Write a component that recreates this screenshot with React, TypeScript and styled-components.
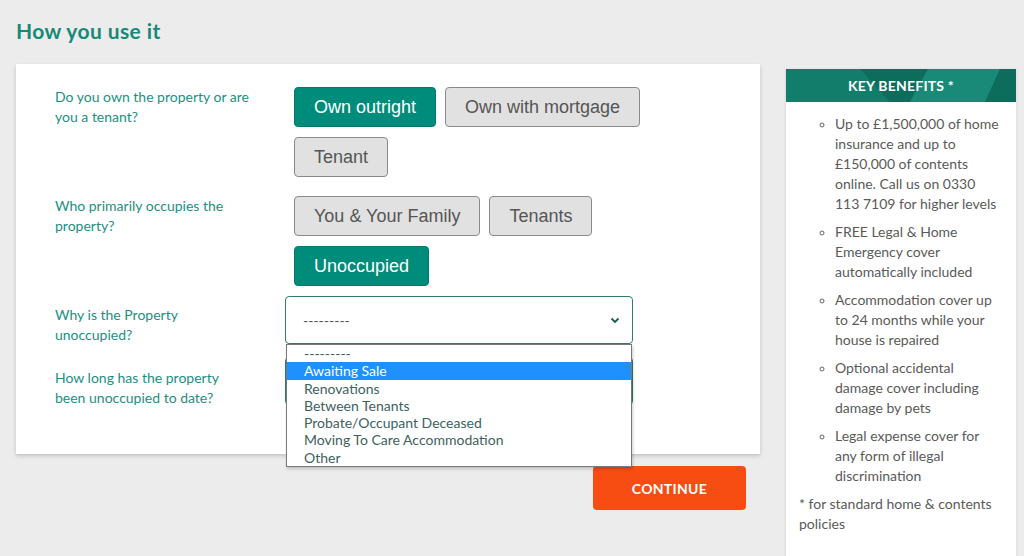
import styled, { createGlobalStyle } from "styled-components"

const Global = createGlobalStyle`
  html, body {
    margin: 0;
    padding: 0;
    background: #ececec;
    overflow: hidden;
  }
  body {
    font-family: Lato, "Noto Sans", "Liberation Sans", sans-serif;
  }
`

const Page = styled.div`
  padding: 19px 8px 0 16px;
  width: 1000px;
  box-sizing: border-box;
`

const Title = styled.h2`
  margin: 0 0 21px;
  font-size: 21px;
  line-height: 24px;
  font-weight: 700;
  letter-spacing: 0.4px;
  color: #168a78;
`

const Layout = styled.div`
  display: flex;
  align-items: flex-start;
  gap: 26px;
`

const Main = styled.div`
  width: 744px;
  flex: none;
`

const Card = styled.div`
  background: #fff;
  box-shadow: 0 2px 4px rgba(0, 0, 0, 0.18);
  padding: 23px 0 46px 39px;
`

const QuestionRow = styled.div<{ $space?: number }>`
  display: flex;
  align-items: flex-start;
  margin-top: ${(p) => p.$space ?? 0}px;
`

const Label = styled.div<{ $pad?: number }>`
  width: 230px;
  flex: none;
  box-sizing: border-box;
  padding: ${(p) => p.$pad ?? 0}px 34px 0 0;
  font-size: 14px;
  line-height: 20px;
  color: #1d8f7f;
`

const Options = styled.div`
  width: 380px;
  display: flex;
  flex-wrap: wrap;
  gap: 10px 9px;
  padding-left: 9px;
`

const Choice = styled.button<{ $active?: boolean }>`
  height: 40px;
  padding: 0 19px;
  border-radius: 4px;
  font-family: "Liberation Sans", Arial, sans-serif;
  font-size: 18px;
  border: 1px solid ${(p) => (p.$active ? "#007a6b" : "#8a8a8a")};
  background: ${(p) => (p.$active ? "#008c7a" : "#e1e1e1")};
  color: ${(p) => (p.$active ? "#fff" : "#555")};
`

const SelectWrap = styled.div`
  position: relative;
  width: 348px;
`

const SelectBox = styled.div`
  height: 48px;
  box-sizing: border-box;
  border: 1px solid #2f7d70;
  border-radius: 4px;
  padding: 0 12px 0 17px;
  display: flex;
  align-items: center;
  justify-content: space-between;
  font-size: 14px;
  color: #555;
  background: #fff;
`

const Chevron = () => (
  <svg width="10" height="7" viewBox="0 0 10 7">
    <path d="M1.5 1.5 L5 5 L8.5 1.5" fill="none" stroke="#1f5a52" strokeWidth="1.8" />
  </svg>
)

const OptionList = styled.ul`
  position: absolute;
  top: 48px;
  left: 1px;
  width: 346px;
  box-sizing: border-box;
  margin: 0;
  padding: 0;
  list-style: none;
  background: #fff;
  border: 1px solid #7a7a7a;
  box-shadow: 1px 2px 3px rgba(0, 0, 0, 0.2);
  z-index: 5;
`

const Option = styled.li<{ $hover?: boolean }>`
  padding: 0 17px;
  height: 17.3px;
  font-size: 14px;
  line-height: 17px;
  color: ${(p) => (p.$hover ? "#fff" : "#3d625f")};
  background: ${(p) => (p.$hover ? "#1e90ff" : "transparent")};
`

const Actions = styled.div`
  display: flex;
  justify-content: flex-end;
  padding: 12px 14px 0 0;
`

const Continue = styled.button`
  width: 153px;
  height: 44px;
  border: none;
  border-radius: 4px;
  background: #f84d12;
  color: #fff;
  font-family: Lato, "Noto Sans", sans-serif;
  font-weight: 700;
  font-size: 14px;
  letter-spacing: 0.3px;
`

const Sidebar = styled.aside`
  width: 230px;
  flex: none;
  margin-top: 5px;
  box-shadow: 0 1px 3px rgba(0, 0, 0, 0.12);
`

const SideHeader = styled.div`
  position: relative;
  height: 33px;
  display: flex;
  align-items: center;
  justify-content: center;
  background: #137d6b;
  overflow: hidden;
`

const HeaderArt = styled.svg`
  position: absolute;
  inset: 0;
  width: 100%;
  height: 100%;
`

const HeaderText = styled.span`
  position: relative;
  color: #fff;
  font-weight: 700;
  font-size: 14px;
  letter-spacing: 0.2px;
`

const SideBody = styled.div`
  background: #fff;
  height: 480px;
  padding: 12px 13px 0 0;
  color: #5a5a5a;
  font-size: 14px;
  line-height: 20px;
`

const Benefits = styled.ul`
  margin: 0;
  padding-left: 49px;
  list-style-type: circle;
  li {
    margin-bottom: 8px;
  }
  li::marker {
    font-size: 12px;
    color: #666;
  }
`

const Footnote = styled.p`
  margin: 8px 0 0;
  padding-left: 13px;
`

const occupancyReasons = [
  "---------",
  "Awaiting Sale",
  "Renovations",
  "Between Tenants",
  "Probate/Occupant Deceased",
  "Moving To Care Accommodation",
  "Other",
]

const benefits = [
  "Up to £1,500,000 of home insurance and up to £150,000 of contents online. Call us on 0330 113 7109 for higher levels",
  "FREE Legal & Home Emergency cover automatically included",
  "Accommodation cover up to 24 months while your house is repaired",
  "Optional accidental damage cover including damage by pets",
  "Legal expense cover for any form of illegal discrimination",
]

export default function App() {
  return (
    <Page>
      <Global />
      <Title>How you use it</Title>
      <Layout>
        <Main>
          <Card>
            <QuestionRow>
              <Label>Do you own the property or are you a tenant?</Label>
              <Options>
                <Choice $active>Own outright</Choice>
                <Choice>Own with mortgage</Choice>
                <Choice>Tenant</Choice>
              </Options>
            </QuestionRow>
            <QuestionRow $space={19}>
              <Label>Who primarily occupies the property?</Label>
              <Options>
                <Choice>You &amp; Your Family</Choice>
                <Choice>Tenants</Choice>
                <Choice $active>Unoccupied</Choice>
              </Options>
            </QuestionRow>
            <QuestionRow $space={10}>
              <Label $pad={9}>Why is the Property unoccupied?</Label>
              <SelectWrap>
                <SelectBox>
                  ---------
                  <Chevron />
                </SelectBox>
                <OptionList>
                  {occupancyReasons.map((r, i) => (
                    <Option key={r} $hover={i === 1}>
                      {r}
                    </Option>
                  ))}
                </OptionList>
              </SelectWrap>
            </QuestionRow>
            <QuestionRow $space={12}>
              <Label $pad={11}>How long has the property been unoccupied to date?</Label>
              <SelectWrap>
                <SelectBox>
                  <span />
                  <Chevron />
                </SelectBox>
              </SelectWrap>
            </QuestionRow>
          </Card>
          <Actions>
            <Continue>CONTINUE</Continue>
          </Actions>
        </Main>
        <Sidebar>
          <SideHeader>
            <HeaderArt viewBox="0 0 230 33" preserveAspectRatio="none">
              <polygon points="74,0 142,0 124,33 104,33" fill="#0c6d5c" />
              <polygon points="142,0 214,0 199,33 124,33" fill="#1a8a78" />
              <polygon points="214,0 230,0 230,33 199,33" fill="#0c6d5c" />
            </HeaderArt>
            <HeaderText>KEY BENEFITS *</HeaderText>
          </SideHeader>
          <SideBody>
            <Benefits>
              {benefits.map((b) => (
                <li key={b}>{b}</li>
              ))}
            </Benefits>
            <Footnote>* for standard home &amp; contents policies</Footnote>
          </SideBody>
        </Sidebar>
      </Layout>
    </Page>
  )
}
